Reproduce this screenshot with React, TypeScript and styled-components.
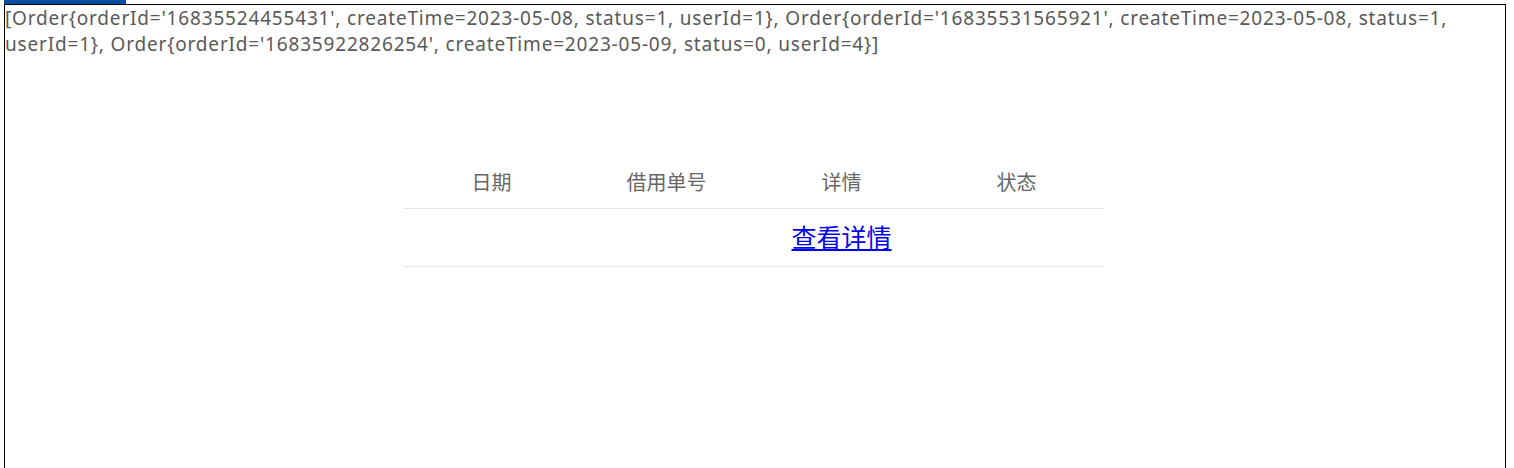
import React from "react";
import styled, { createGlobalStyle } from "styled-components";

const Global = createGlobalStyle`
  html, body { margin: 0; padding: 0; background: #fff; }
  body { font-family: "Noto Sans", "Noto Sans CJK SC", sans-serif; }
`;

const Page = styled.div`
  padding-left: 4px;
  width: 1502px;
`;

const Tab = styled.div`
  width: 122px;
  height: 4px;
  background: #0a4ea3;
`;

const Frame = styled.div`
  border: 1px solid #000;
  border-bottom: none;
  height: 470px;
  box-sizing: border-box;
`;

const Dump = styled.div`
  font-family: "Noto Sans", "Noto Sans CJK SC", sans-serif;
  font-size: 19px;
  letter-spacing: 0.82px;
  line-height: 26px;
  color: #595959;
  margin: 0;
`;

const TableWrap = styled.div`
  display: flex;
  justify-content: center;
  margin-top: 103px;
  margin-left: -2px;
`;

const Table = styled.table`
  width: 700px;
  border-collapse: collapse;
  font-family: "Noto Sans CJK SC", sans-serif;
`;

const Th = styled.th`
  width: 175px;
  font-weight: normal;
  font-size: 20px;
  color: #666;
  height: 48px;
  padding: 0 0 4px;
  box-sizing: border-box;
  border-bottom: 1px solid #e4e4e4;
  text-align: center;
`;

const Td = styled.td`
  height: 58px;
  padding: 0 0 2px;
  box-sizing: border-box;
  text-align: center;
  border-bottom: 1px solid #e4e4e4;
`;

const DetailLink = styled.a`
  font-size: 25px;
  color: #0000ee;
  text-decoration: underline;
`;

const text =
  "[Order{orderId='16835524455431', createTime=2023-05-08, status=1, userId=1}, Order{orderId='16835531565921', createTime=2023-05-08, status=1, userId=1}, Order{orderId='16835922826254', createTime=2023-05-09, status=0, userId=4}]";

export default function App() {
  return (
    <>
      <Global />
      <Page>
        <Tab />
        <Frame>
          <Dump>{text}</Dump>
          <TableWrap>
            <Table>
              <thead>
                <tr>
                  <Th>日期</Th>
                  <Th>借用单号</Th>
                  <Th>详情</Th>
                  <Th>状态</Th>
                </tr>
              </thead>
              <tbody>
                <tr>
                  <Td></Td>
                  <Td></Td>
                  <Td>
                    <DetailLink href="#">查看详情</DetailLink>
                  </Td>
                  <Td></Td>
                </tr>
              </tbody>
            </Table>
          </TableWrap>
        </Frame>
      </Page>
    </>
  );
}
